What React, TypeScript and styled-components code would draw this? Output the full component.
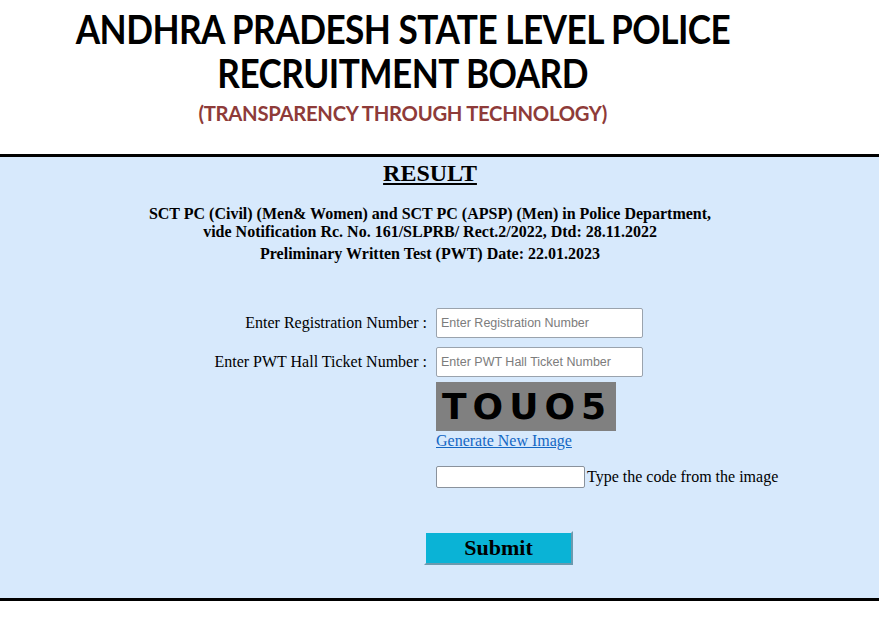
import React from "react";
import styled, {createGlobalStyle} from "styled-components";

const GlobalStyle = createGlobalStyle`
  html, body {
    margin: 0;
    padding: 0;
    background: #ffffff;
  }
  body {
    font-family: "Liberation Serif", "Times New Roman", serif;
    color: #000000;
  }
`;

const App = () => {
    return (
        <>
            <GlobalStyle/>
            <Page>
                <Header>
                    <Title>ANDHRA PRADESH STATE LEVEL POLICE</Title>
                    <Title>RECRUITMENT BOARD</Title>
                    <Tagline>(TRANSPARENCY THROUGH TECHNOLOGY)</Tagline>
                </Header>

                <Panel>
                    <Heading>RESULT</Heading>
                    <Notice>
                        SCT PC (Civil) (Men&amp; Women) and SCT PC (APSP) (Men) in Police Department,
                        <br/>
                        vide Notification Rc. No. 161/SLPRB/ Rect.2/2022, Dtd: 28.11.2022
                    </Notice>
                    <ExamDate>Preliminary Written Test (PWT) Date: 22.01.2023</ExamDate>

                    <Form onSubmit={(e) => e.preventDefault()}>
                        <Label htmlFor="regno">Enter Registration Number :</Label>
                        <TextInput id="regno" placeholder="Enter Registration Number"/>

                        <Label htmlFor="htno">Enter PWT Hall Ticket Number :</Label>
                        <TextInput id="htno" placeholder="Enter PWT Hall Ticket Number"/>

                        <span/>
                        <CaptchaCell>
                            <Captcha>TOUO5</Captcha>
                            <NewImageLink href="#">Generate New Image</NewImageLink>
                        </CaptchaCell>

                        <span/>
                        <CodeRow>
                            <CodeInput/>
                            <CodeHint>Type the code from the image</CodeHint>
                        </CodeRow>
                    </Form>

                    <SubmitRow>
                        <SubmitButton type="button">Submit</SubmitButton>
                    </SubmitRow>
                </Panel>
            </Page>
        </>
    );
};

export default App;


const Page = styled.div`
  width: 879px;
`

const Header = styled.div`
  width: 806px;
  padding-top: 7px;
  height: 154px;
  box-sizing: border-box;
  display: flex;
  flex-direction: column;
  align-items: center;
  font-family: "Lato", "Open Sans", sans-serif;
`

const Title = styled.div`
  font-size: 40px;
  font-weight: 700;
  line-height: 44px;
  letter-spacing: -0.6px;
  color: #000000;
  white-space: nowrap;
  transform: scaleX(0.88);
`

const Tagline = styled.div`
  margin-top: 5px;
  font-size: 21px;
  font-weight: 700;
  line-height: 26px;
  letter-spacing: -0.3px;
  color: #8e3b39;
  white-space: nowrap;
  transform: scaleX(0.965);
`

const Panel = styled.div`
  background: #d7e9fc;
  border-top: 3px solid #000000;
  border-bottom: 3px solid #000000;
  height: 441px;
  box-sizing: content-box;
`

const Heading = styled.div`
  width: 860px;
  text-align: center;
  padding-top: 2px;
  font-size: 24px;
  font-weight: 700;
  line-height: 28px;
  text-decoration: underline;
`

const Notice = styled.div`
  width: 860px;
  margin-top: 18px;
  text-align: center;
  font-size: 16px;
  font-weight: 700;
  line-height: 18px;
`

const ExamDate = styled(Notice)`
  margin-top: 4px;
`

const Form = styled.form`
  margin-top: 45px;
  display: grid;
  grid-template-columns: 427px auto;
  column-gap: 9px;
  row-gap: 9px;
  align-items: center;
  justify-content: start;
`

const Label = styled.label`
  text-align: right;
  font-size: 16px;
  line-height: 18px;
`

const TextInput = styled.input`
  width: 207px;
  height: 30px;
  box-sizing: border-box;
  border: 1px solid #9aa3ad;
  border-radius: 2px;
  background: #ffffff;
  padding: 0 4px;
  font-family: "Liberation Sans", Arial, sans-serif;
  font-size: 12.5px;
  outline: none;

  &::placeholder {
    color: #7c7c7c;
  }
`

const CaptchaCell = styled.div`
  margin-top: -4px;
  display: flex;
  flex-direction: column;
  align-items: flex-start;
`

const Captcha = styled.div`
  width: 180px;
  height: 49px;
  box-sizing: border-box;
  padding-left: 6px;
  background: #808080;
  color: #000000;
  font-family: "DejaVu Sans", sans-serif;
  font-weight: 700;
  font-size: 36px;
  line-height: 49px;
  letter-spacing: 6px;
  white-space: nowrap;
  overflow: hidden;
`

const NewImageLink = styled.a`
  margin-top: 1px;
  font-size: 16px;
  line-height: 18px;
  color: #1467c4;
  text-decoration: underline;
`

const CodeRow = styled.div`
  margin-top: 7px;
  display: flex;
  align-items: center;
`

const CodeInput = styled.input`
  width: 149px;
  height: 22px;
  box-sizing: border-box;
  border: 1px solid #8a929c;
  border-radius: 2px;
  background: #ffffff;
  outline: none;
`

const CodeHint = styled.span`
  margin-left: 2px;
  font-size: 16px;
  line-height: 18px;
`

const SubmitRow = styled.div`
  margin-top: 43px;
  padding-left: 424px;
`

const SubmitButton = styled.button`
  width: 149px;
  height: 34px;
  background: #0ab3d6;
  border-top: 2px solid #d7e9fc;
  border-left: 2px solid #d7e9fc;
  border-right: 2px solid #6b9aae;
  border-bottom: 2px solid #6b9aae;
  font-family: "Liberation Serif", "Times New Roman", serif;
  font-size: 22px;
  font-weight: 700;
  color: #000000;
  padding: 0;
  cursor: pointer;
`
